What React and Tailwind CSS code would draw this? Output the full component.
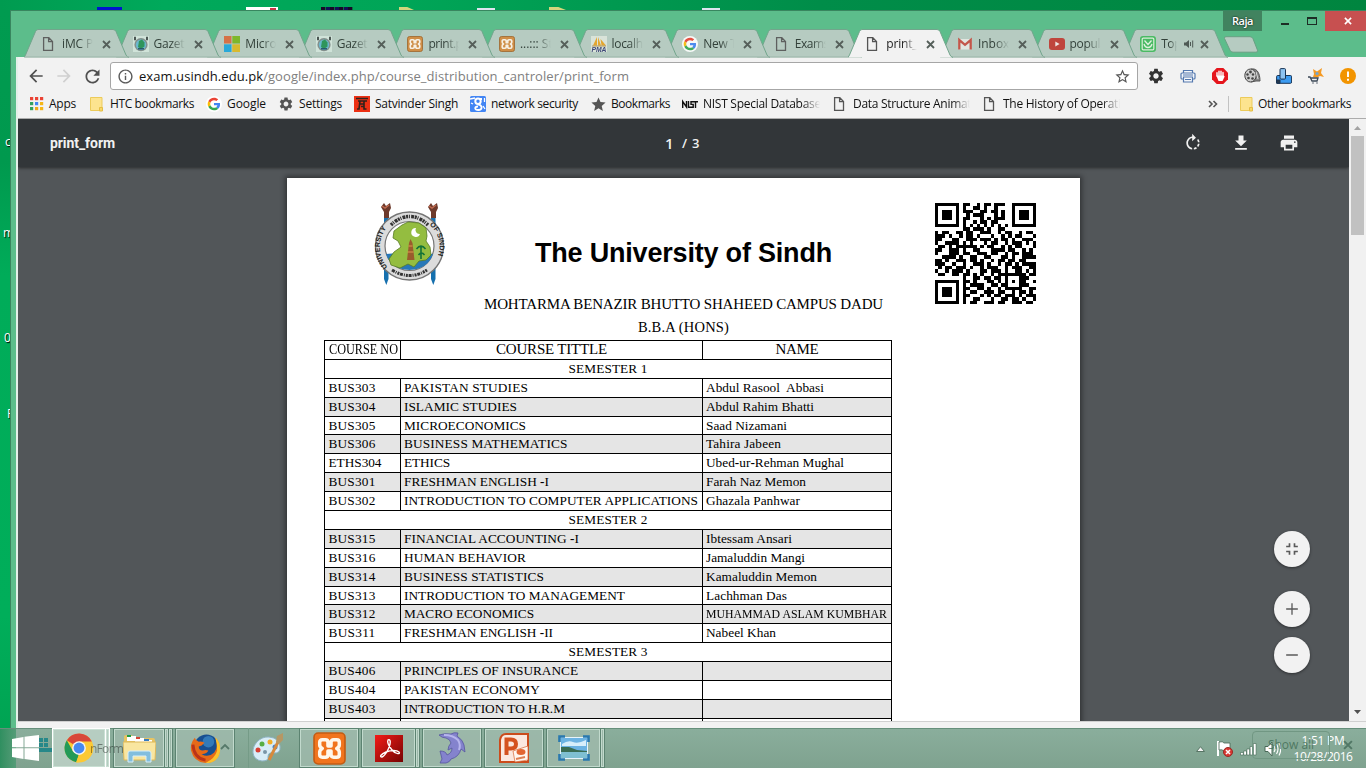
import React, { useLayoutEffect, useRef, useState } from 'react';

// Text set to an exact advance width, by letter spacing or by horizontal squeeze.
function Fit({ w, children, className = '', squeeze = false }) {
  const ref = useRef(null);
  const [style, setStyle] = useState({});
  useLayoutEffect(() => {
    const el = ref.current;
    const natural = el.getBoundingClientRect().width;
    const n = Math.max(1, el.textContent.length);
    setStyle(
      squeeze
        ? { transform: `scaleX(${w / natural})`, transformOrigin: '0 50%', marginRight: w - natural }
        : { letterSpacing: `${(w - natural) / n}px` }
    );
  }, []);
  return (
    <span ref={ref} style={style} className={`inline-block shrink-0 whitespace-pre ${className}`}>
      {children}
    </span>
  );
}

const PageIcon = () => (
  <svg width="16" height="16" viewBox="0 0 16 16" fill="none" stroke="#555" strokeWidth="1.3">
    <path d="M2.600 1.700h5.200l3.700 3.800v8.800H2.600zM7.600 1.700v4h3.900" />
  </svg>
);
const Cross = ({ c = '#555f5a', s = 9 }) => (
  <svg width={s} height={s} viewBox="0 0 9 9" stroke={c} strokeWidth="1.8"><path d="M1 1l7 7M8 1L1 8" /></svg>
);
const Google = ({ bg = true }) => (
  <svg width="16" height="16" viewBox="0 0 48 48">
    {bg && <circle cx="24" cy="24" r="24" fill="#fff" />}
    <g transform="translate(5 5) scale(.79)">
      <path fill="#EA4335" d="M24 9.5c3.54 0 6.71 1.22 9.21 3.6l6.85-6.85C35.9 2.38 30.47 0 24 0 14.62 0 6.51 5.38 2.56 13.22l7.98 6.19C12.43 13.72 17.74 9.5 24 9.5z" />
      <path fill="#4285F4" d="M46.98 24.55c0-1.57-.15-3.09-.38-4.55H24v9.02h12.94c-.58 2.96-2.26 5.48-4.78 7.18l7.73 6c4.51-4.18 7.09-10.36 7.09-17.65z" />
      <path fill="#FBBC05" d="M10.53 28.59c-.48-1.45-.76-2.99-.76-4.59s.27-3.14.76-4.59l-7.98-6.19C.92 16.46 0 20.12 0 24c0 3.88.92 7.54 2.56 10.78l7.97-6.19z" />
      <path fill="#34A853" d="M24 48c6.48 0 11.93-2.13 15.89-5.81l-7.73-6c-2.15 1.45-4.92 2.3-8.16 2.3-6.26 0-11.57-4.22-13.47-9.91l-7.98 6.19C6.51 42.62 14.62 48 24 48z" />
    </g>
  </svg>
);
const Gazette = () => (
  <svg width="16" height="16" viewBox="0 0 16 16">
    <rect width="16" height="16" fill="#d3e6dc" />
    <circle cx="8" cy="8.7" r="6.6" fill="#7d8886" />
    <circle cx="8" cy="8.7" r="5.2" fill="#62b7d0" />
    <path d="M6 5l3-1.500 2.500 3v4l-3.500 2.500-3-2z" fill="#219052" />
    <path d="M2 .8v3.500M14 .8v3.500" stroke="#303a38" strokeWidth="1.800" />
    <path d="M5 12.800h6" stroke="#17455c" strokeWidth="1.400" />
  </svg>
);
const Xampp = ({ size = 16, edge = '#9a5a1c', fill = '#d2883a' }) => (
  <svg width={size} height={size} viewBox="0 0 32 32">
    <rect x="1" y="1" width="30" height="30" rx="4" fill={fill} stroke={edge} strokeWidth="1.6" />
    <path d="M9 7.500h3q2.500 0 2.500 2.500v3.500h3V10q0-2.500 2.500-2.500h3q2.500 0 2.500 2.500v2.500q0 2-2.500 3.500 2.500 1.500 2.500 3.500V22q0 2.500-2.500 2.500h-3q-2.500 0-2.500-2.500v-3.500h-3V22q0 2.500-2.500 2.500H9Q6.500 24.500 6.500 22v-2.500q0-2 2.500-3.500-2.500-1.500-2.500-3.500V10Q6.500 7.500 9 7.500z" fill="none" stroke="#fff6ea" strokeWidth="3.4" strokeLinejoin="round" />
  </svg>
);
const Microsoft = () => (
  <svg width="16" height="16" viewBox="0 0 16 16">
    <path fill="#d9683a" d="M0 0h7.500v7.500H0z" /><path fill="#79b51c" d="M8.300 0H16v7.500H8.300z" />
    <path fill="#19a5dc" d="M0 8.300h7.500V16H0z" /><path fill="#dcb91f" d="M8.300 8.300H16V16H8.300z" />
  </svg>
);
const Pma = () => (
  <svg width="16" height="16" viewBox="0 0 16 16">
    <rect width="16" height="16" fill="#dde6dc" />
    <path d="M6 1L2 9.500h4zM7 1v8.500h3zM9.500 3l1 6.500h4.500z" fill="#e9a220" />
    <path d="M1 10h14" stroke="#a87c2b" strokeWidth=".8" />
    <text x="0.500" y="16" fontFamily="Liberation Sans" fontSize="6.500" fontWeight="bold" fontStyle="italic" fill="#30396f" textLength="15" lengthAdjust="spacingAndGlyphs">PMA</text>
  </svg>
);
const Gmail = () => (
  <svg width="16" height="16" viewBox="0 0 16 16">
    <path d="M1.500 3h13v10.500h-13z" fill="#e6e9e4" />
    <path d="M2.300 13.500V4l5.700 4.800L13.700 4v9.500" fill="none" stroke="#c54a3e" strokeWidth="2.300" />
  </svg>
);
const Youtube = () => (
  <svg width="16" height="16" viewBox="0 0 16 16"><rect y="2" width="16" height="12" rx="3" fill="#c0382f" /><path d="M6.300 5.500v5l4.300-2.500z" fill="#f3e9e6" /></svg>
);
const Vine = () => (
  <svg width="16" height="16" viewBox="0 0 16 16">
    <rect width="16" height="16" rx="3" fill="#3fb95b" /><rect x="2.200" y="2.200" width="11.600" height="11.600" rx="1" fill="none" stroke="#dff2dd" strokeWidth="1.200" />
    <path d="M4.500 4.500l3.500 4 3.500-4M4 8q1 3.500 4 3.500T12 8" stroke="#e6f6e4" fill="none" strokeWidth="1.300" />
  </svg>
);
const Speaker = () => (
  <svg width="10" height="10" viewBox="0 0 10 10"><path d="M0 3.500h2L5 1v8L2 6.500H0z" fill="#4f5a55" /><path d="M6.500 3v4M8.700 1.500v7" stroke="#4f5a55" strokeWidth="1" /></svg>
);

const TABS = [
  { t: 'iMC P', w: 31, i: <PageIcon /> },
  { t: 'Gazette', w: 41, i: <Gazette /> },
  { t: 'Micros', w: 37, i: <Microsoft /> },
  { t: 'Gazette', w: 41, i: <Gazette /> },
  { t: 'print.ph', w: 41, i: <Xampp /> },
  { t: '...::: Stu', w: 40, i: <Xampp /> },
  { t: 'localho', w: 38, i: <Pma /> },
  { t: 'New Ta', w: 40, i: <Google /> },
  { t: 'Exams', w: 34, i: <PageIcon /> },
  { t: 'print_', w: 31, i: <PageIcon />, on: true },
  { t: 'Inbox (', w: 38, i: <Gmail /> },
  { t: 'popula', w: 37, i: <Youtube /> },
  { t: 'Top', w: 20, i: <Vine />, sound: true },
];
const Z = ['z-[13]', 'z-[12]', 'z-[11]', 'z-10', 'z-[9]', 'z-[8]', 'z-[7]', 'z-[6]', 'z-[5]', 'z-20', 'z-[4]', 'z-[3]', 'z-[2]'];

function Tab({ tab, index }) {
  return (
    <div className={`relative h-7 w-[91.600px] shrink-0 ${Z[index]}`}>
      <svg className="absolute left-0 top-0" width="106" height="29" viewBox="0 0 106 29">
        <path d="M0 28.500L1.500 26 11.500 2.500Q12.300.5 14 .5H89Q91 .5 92 2.500L102 26Q103 28 105 28.500z" fill={tab.on ? '#f2f2f2' : '#b6cbc1'} />
        <path d="M0 28.500L1.500 26 11.500 2.500Q12.300.5 14 .5H89Q91 .5 92 2.500L102 26Q103 28 105 28.500" fill="none" stroke="#72a58c" />
        {!tab.on && <path d="M1 28h104" stroke="#9bb5a8" />}
      </svg>
      <div className="relative flex h-full items-center pl-[17px] pt-0.5">
        <span className={`flex w-[21px] shrink-0 ${tab.on ? '' : 'opacity-90'}`}>{tab.i}</span>
        <span className={`shrink-0 overflow-hidden ${tab.sound ? 'mr-[7px] w-4' : 'mr-[9px] w-[31px]'} [mask-image:linear-gradient(90deg,#000_55%,transparent)]`}>
          <Fit w={tab.w} className={tab.on ? 'text-[#222]' : 'text-[#33413a]'}>{tab.t}</Fit>
        </span>
        {tab.sound && <span className="mr-[6px]"><Speaker /></span>}
        <Cross />
      </div>
    </div>
  );
}

const Folder = () => (
  <svg width="16" height="16" viewBox="0 0 16 16"><path d="M1.500 1.500h11.500v13H1.500z" fill="#fde48f" stroke="#eccb5a" /><path d="M10.500 15v-3.500h3V15z" fill="#f8d766" stroke="#e5be44" /></svg>
);
const Apps = () => {
  const c = ['#ea4335', '#ea4335', '#ea4335', '#34a060', '#4285f4', '#f5b513', '#34a060', '#f0a71a', '#f5b513'];
  return <svg width="16" height="16" viewBox="0 0 16 16">{c.map((f, i) => <rect key={i} x={2 + (i % 3) * 5} y={1 + Math.floor(i / 3) * 5} width="3.200" height="3.200" fill={f} />)}</svg>;
};
const GEAR = 'M19.140 12.940c.04-.3.06-.61.06-.94 0-.32-.02-.64-.07-.94l2.030-1.580c.18-.14.23-.41.12-.61l-1.920-3.320c-.12-.22-.37-.29-.59-.22l-2.390.96c-.5-.38-1.030-.7-1.620-.94l-.36-2.540c-.04-.24-.24-.41-.48-.41h-3.840c-.24 0-.43.17-.47.41l-.36 2.540c-.59.24-1.130.57-1.620.94l-2.390-.96c-.22-.08-.47 0-.59.22L2.740 8.870c-.12.21-.08.47.12.61l2.030 1.580c-.05.3-.09.63-.09.94s.02.64.07.94l-2.030 1.580c-.18.14-.23.41-.12.61l1.920 3.320c.12.22.37.29.59.22l2.390-.96c.5.38 1.030.7 1.620.94l.36 2.540c.05.24.24.41.48.41h3.840c.24 0 .44-.17.47-.41l.36-2.540c.59-.24 1.130-.56 1.620-.94l2.390.96c.22.08.47 0 .59-.22l1.920-3.320c.12-.22.07-.47-.12-.61l-2.010-1.580zM12 15.600c-1.980 0-3.600-1.620-3.600-3.600s1.620-3.600 3.600-3.600 3.600 1.620 3.600 3.600-1.620 3.600-3.600 3.600z';
const Mat = ({ d, s = 18, c = '#f1f1f1' }) => <svg width={s} height={s} viewBox="0 0 24 24" fill={c}><path d={d} /></svg>;
const STAR = 'M12 17.270L18.180 21l-1.640-7.030L22 9.240l-7.190-.61L12 2 9.190 8.630 2 9.240l5.460 4.730L5.820 21z';

const Torii = () => (
  <svg width="16" height="16" viewBox="0 0 16 16"><rect width="16" height="16" fill="#ec3013" /><path d="M2 2.500h12M4 5h9M6 5L5 13H3M10 5v8h2.500M6 8h4v2.500H7" stroke="#30221c" strokeWidth="1.600" fill="none" /></svg>
);
const BlueG = () => (
  <svg width="16" height="16" viewBox="0 0 16 16"><rect width="16" height="16" rx="1.500" fill="#4285f4" /><path d="M0 3l5-1M1 7l2 1M14.500 2v4M13 10l2 3" stroke="#fff" strokeWidth="1.300" /><circle cx="8" cy="5.300" r="2.700" fill="none" stroke="#fff" strokeWidth="2" /><path d="M9.500 3h2.500M8 8.300c5 1 4.500 5.700.3 5.700C4 14 4.500 10.500 8 10.500" stroke="#fff" strokeWidth="1.800" fill="none" /></svg>
);
const Nist = () => (
  <svg width="16" height="16" viewBox="0 0 16 16"><path d="M.7 12V5.500L4.500 11V5M6.500 5v6.300h4.700V8.400H9V5.700h7M13.500 5.700V12" stroke="#111" strokeWidth="1.400" fill="none" /></svg>
);

const BOOKMARKS = [
  { t: 'Apps', w: 27, box: 'w-[61px]', i: <Apps /> },
  { t: 'HTC bookmarks', w: 84, box: 'w-[117px]', i: <Folder /> },
  { t: 'Google', w: 39, box: 'w-[72px]', i: <Google /> },
  { t: 'Settings', w: 43, box: 'w-[76px]', i: <Mat s={16} c="#555" d={GEAR} /> },
  { t: 'Satvinder Singh', w: 83, box: 'w-[116px]', i: <Torii /> },
  { t: 'network security', w: 87, box: 'w-[120px]', i: <BlueG /> },
  { t: 'Bookmarks', w: 59, box: 'w-[92px]', i: <Mat s={17} c="#555" d={STAR} /> },
  { t: 'NIST Special Database', w: 118, box: 'w-[150px]', i: <Nist />, fade: true },
  { t: 'Data Structure Animati', w: 121, box: 'w-[150px]', i: <PageIcon />, fade: true },
  { t: 'The History of Operatin', w: 125, box: 'w-[150px]', i: <PageIcon />, fade: true },
];

const EXTENSIONS = [
  <Mat s={18} c="#333" d={GEAR} />,
  <svg width="16" height="16" viewBox="0 0 16 16" fill="#f4f7fb" stroke="#5478ae" strokeWidth="1.200"><path d="M3.500 5V2.500h9V5" /><rect x="1" y="5" width="14" height="6" rx="1" /><path d="M3.500 9h9v5h-9zM3 7h10M5 11.500h6" /></svg>,
  <svg width="16" height="16" viewBox="0 0 16 16"><path d="M4.700 0h6.600L16 4.700v6.600L11.300 16H4.700L0 11.300V4.700z" fill="#e5151c" /><path d="M5 8V4.800M7 7.500V3.300M9 7.500V3.300M11 8V4.500" stroke="#fff" strokeWidth="1.400" strokeLinecap="round" /><path d="M4.300 7.500h7.400L12.700 8.500 10.500 13H6.500z" fill="#fff" /></svg>,
  <svg width="17" height="16" viewBox="0 0 17 16"><path d="M7 1h3c5 1 6 8 6 12h-4L7 14z" fill="#888" stroke="#555" /><ellipse cx="6.500" cy="7.500" rx="5.700" ry="6.500" fill="#ccc" stroke="#444" /><g fill="#444"><circle cx="6.500" cy="4" r="1.400" /><circle cx="3.500" cy="6.500" r="1.200" /><circle cx="9" cy="6.500" r="1.200" /><circle cx="4.500" cy="10" r="1.300" /><circle cx="8.500" cy="10.500" r="1.300" /></g><path d="M12 4l2 7" stroke="#ddd" /></svg>,
  <svg width="16" height="16" viewBox="0 0 16 16" stroke="#193454" strokeWidth="1"><rect x=".6" y="7.500" width="15" height="7.800" rx="1.200" fill="#3c9bf1" /><path d="M.6 12h3.400v3.300H.6z" fill="#27384c" /><rect x="4" y=".6" width="5.500" height="10.500" rx="1" fill="#8cc2f0" /></svg>,
  <svg width="16" height="16" viewBox="0 0 16 16"><path d="M5 1l4 2.500L14 0l-1 5 3 4-4-1-3 1.500L5 9l1-3z" fill="#f59a23" /><circle cx="9" cy="5.500" r="1.600" fill="#71a6d4" /><path d="M0 9h2l2 4h5l1-3H3M4.500 15h1M8.500 15h1" stroke="#3d4958" strokeWidth="1.300" fill="none" /></svg>,
  <svg width="16" height="16" viewBox="0 0 16 16"><circle cx="8" cy="8" r="8" fill="#f29400" /><path d="M8 3.500v5.500M8 10.700v2" stroke="#fff" strokeWidth="1.900" /></svg>,
];

function Browser() {
  return (
    <div className="absolute left-[10px] top-[10px] flex h-[758px] w-[1356px] flex-col border-l border-t border-[#38865f] bg-[#5cbd8b]">
      <div className="relative h-[18px] shrink-0">
        <div className="absolute right-0 top-0 flex h-5">
          <div className="flex w-[39px] items-center justify-center bg-[#41835f] text-[11px] text-white [text-shadow:0_0_2px_#000]"><Fit w={21} className="font-semibold">Raja</Fit></div>
          <div className="flex w-[63px] items-center pl-[19px]">
            <div className="mr-[18px] mt-1.5 h-[2px] w-2 bg-[#1d2d25]" />
            <div className="h-2 w-[10px] border border-t-2 border-[#1d2d25]" />
          </div>
          <div className="flex w-[41px] items-center justify-center bg-[#c75050] pl-1"><Cross c="#fff" s={8} /></div>
        </div>
      </div>
      <div className="flex h-7 shrink-0 pl-[13px]">
        {TABS.map((t, i) => <Tab key={i} tab={t} index={i} />)}
        <svg className="ml-[8.500px] mt-[7px]" width="36" height="18" viewBox="0 0 36 18"><path d="M3 .7h24q2 0 3 2l4.500 11.500q.5 2-1.500 2H10q-2 0-3-2L1.500 2.500Q1 .7 3 .7z" fill="#b6cbc1" stroke="#69a083" /></svg>
      </div>
      <div className="ml-[5px] flex min-h-0 flex-1 flex-col border-l-2 border-[#e6f0ea] bg-[#f2f2f2]">
        <div className="flex h-[35px] shrink-0 items-center pl-[8px] pt-[3px]">
          <span className="flex w-7"><Mat s={20} c="#505050" d="M20 11H7.830l5.590-5.590L12 4l-8 8 8 8 1.410-1.410L7.830 13H20v-2z" /></span>
          <span className="flex w-7"><Mat s={20} c="#d0d0d0" d="M12 4l-1.410 1.410L16.170 11H4v2h12.170l-5.580 5.590L12 20l8-8z" /></span>
          <span className="flex w-[28px]"><Mat s={21} c="#505050" d="M17.650 6.350C16.200 4.900 14.210 4 12 4c-4.420 0-7.990 3.580-7.990 8s3.570 8 7.990 8c3.730 0 6.840-2.550 7.730-6h-2.080c-.82 2.330-3.040 4-5.650 4-3.310 0-6-2.690-6-6s2.690-6 6-6c1.660 0 3.140.69 4.220 1.780L13 11h7V4l-2.350 2.350z" /></span>
          <div className="flex h-7 w-[1028px] items-center rounded-[3px] border border-[#a6a6a6] bg-white pl-[6px]">
            <Mat s={17} c="#5a5a5a" d="M11 17h2v-6h-2v6zm1-15C6.480 2 2 6.480 2 12s4.480 10 10 10 10-4.480 10-10S17.520 2 12 2zm0 18c-4.410 0-8-3.590-8-8s3.590-8 8-8 8 3.590 8 8-3.590 8-8 8zM11 9h2V7h-2v2z" />
            <Fit w={490} className="ml-[5px] text-[13px] text-[#808080]"><span className="text-[#111]">exam.usindh.edu.pk</span>/google/index.php/course_distribution_cantroler/print_form</Fit>
            <span className="ml-auto mr-1.5"><Mat s={17} c="#555" d="M22 9.240l-7.190-.62L12 2 9.190 8.630 2 9.240l5.460 4.730L5.820 21 12 17.270 18.180 21l-1.630-7.030L22 9.240zM12 15.400l-3.760 2.270 1-4.280-3.320-2.880 4.380-.38L12 6.100l1.710 4.040 4.380.38-3.320 2.880 1 4.280L12 15.400z" /></span>
          </div>
          <div className="ml-[2px] flex">
            {EXTENSIONS.map((e, i) => <span key={i} className="flex w-8 items-center justify-center">{e}</span>)}
          </div>
        </div>
        <div className="flex h-[27px] shrink-0 items-center border-b border-[#acacac] pb-0.5 pl-[10px] text-[#111]">
          {BOOKMARKS.map((b) => (
            <div key={b.t} className={`flex shrink-0 items-center ${b.box}`}>
              <span className="flex w-[21px] shrink-0">{b.i}</span>
              <span className={b.fade ? 'w-[117px] overflow-hidden [mask-image:linear-gradient(90deg,#000_85%,transparent)]' : ''}><Fit w={b.w}>{b.t}</Fit></span>
            </div>
          ))}
          <svg className="ml-[76px]" width="10" height="9" viewBox="0 0 10 9" fill="none" stroke="#555" strokeWidth="1.600"><path d="M1 1l3 3-3 3M5.500 1l3 3-3 3" /></svg>
          <div className="mx-[10px] h-4 w-px bg-[#c2c2c2]" />
          <Folder />
          <Fit w={93} className="ml-[3px]">Other bookmarks</Fit>
        </div>
        <div className="flex h-[602px] shrink-0">
          <Viewer />
          <div className="flex w-[17px] flex-col items-center bg-[#f1f1f1] pt-[7px]">
            <svg width="7" height="4" viewBox="0 0 7 4" fill="#a3a3a3"><path d="M0 4L3.500 0 7 4z" /></svg>
            <div className="mt-[6px] h-[99px] w-[13px] bg-[#c1c1c1]" />
            <svg className="mb-[7px] mt-auto" width="7" height="4" viewBox="0 0 7 4" fill="#505050"><path d="M0 0L3.500 4 7 0z" /></svg>
          </div>
        </div>
        <div className="flex-1 border-t border-[#d0d0d0] bg-[#f2f2f2]" />
      </div>
    </div>
  );
}

function Viewer() {
  return (
    <div className="relative flex h-full w-[1331px] flex-col overflow-hidden bg-[#525659]">
      <div className="relative z-10 flex h-12 shrink-0 items-center bg-[#323639] pl-8 text-[#f1f1f1] shadow-[0_1px_3px_rgba(0,0,0,.5)]">
        <Fit w={65} className="font-['Roboto','Open_Sans',sans-serif] text-[14px] font-bold">print_form</Fit>
        <div className="ml-[550px] flex w-[36px] items-center font-['Open_Sans',sans-serif] font-semibold"><span className="w-[17px] text-[15px]">1</span><span className="w-[10px] text-[13px]">/</span><span className="text-[13px]">3</span></div>
        <div className="ml-auto mr-[50px] flex gap-7">
          <Mat s={20} d="M15.550 5.550L11 1v3.070C7.060 4.560 4 7.920 4 12s3.050 7.440 7 7.930v-2.020c-2.840-.48-5-2.940-5-5.910s2.160-5.430 5-5.910V10l4.550-4.450zM19.930 11c-.17-1.390-.72-2.730-1.620-3.890l-1.420 1.420c.54.75.88 1.600 1.020 2.470h2.020zM13 17.900v2.020c1.390-.17 2.740-.71 3.900-1.610l-1.440-1.440c-.75.54-1.590.89-2.460 1.030zm3.890-2.420l1.420 1.410c.9-1.160 1.450-2.500 1.620-3.890h-2.020c-.14.870-.48 1.720-1.020 2.480z" />
          <Mat s={20} d="M19 9h-4V3H9v6H5l7 7 7-7zM5 18v2h14v-2H5z" />
          <Mat s={20} d="M19 8H5c-1.660 0-3 1.340-3 3v6h4v4h12v-4h4v-6c0-1.660-1.340-3-3-3zm-3 11H8v-5h8v5zm3-7c-.55 0-1-.45-1-1s.45-1 1-1 1 .45 1 1-.45 1-1 1zm-1-9H6v4h12V3z" />
        </div>
      </div>
      <Sheet />
      <div className="absolute right-[39px] top-[412px] flex flex-col">
        {[
          ['mb-6', 20, 'M5 16h3v3h2v-5H5v2zm3-8H5v2h5V5H8v3zm6 11h2v-3h3v-2h-5v5zm2-11V5h-2v5h5V8h-3z'],
          ['mb-2.5', 20, 'M19 12.800h-6.200V19h-1.600v-6.200H5v-1.600h6.200V5h1.600v6.200H19z'],
          ['', 20, 'M19 12.900H5v-1.800h14z'],
        ].map(([m, s, d]) => (
          <div key={d} className={`flex size-9 items-center justify-center rounded-full bg-[#f2f2f2] shadow-[0_1px_3px_rgba(0,0,0,.45)] ${m}`}><Mat s={s} c="#5a5a5a" d={d} /></div>
        ))}
      </div>
    </div>
  );
}

const QR_ROWS = [
  '........##..#.##.###.........',
  '........#..##.#..#...........',
  '........###..##.##.#.........',
  '.........#.###...#.#.........',
  '........##...#.#.###.........',
  '........#..#.##.##...........',
  '.............................',
  '........##.###.#..##.........',
  '#.##..##.##..###..#.##..#.##.',
  '###.#..#.##.#...#..#.#.##...#',
  '##...##..###.###.#.##.#..###.',
  '#..####.#.#...#.##..#.###.#.#',
  '.##.#..#####.#.##..#.#.##...#',
  '##..###.#..##...####.##..#.#.',
  '#...###.##..###.##..#.##.###.',
  '..####.#..##..##...##.#..####',
  '##.#..###.##.#..#.##.##.##...',
  '###..#..#..###.#..#.##.#.####',
  '.#.##.###.#..#.###..#.###..##',
  '#..#.###.#...##.###.#..##.#.#',
  '.##..##.##.#.#..#.########.##',
  '........#..##.##.##.#...###..',
  '........##.#...##.#.#.#.##..#',
  '........#.####..##.##...###..',
  '........##..##.#..#.#####..##',
  '........#.##..###.##..#.##.#.',
  '........##...#.#.##.###.#.###',
  '........#..##...#..##.##.#..#',
  '........#.##..###.##..###.##.',
];
const Qr = () => (
  <svg width="101" height="101" viewBox="0 0 29 29" shapeRendering="crispEdges">
    {QR_ROWS.flatMap((r, y) => [...r].map((c, x) => (c === '#' ? <rect key={`${x}-${y}`} x={x} y={y} width="1" height="1" /> : null)))}
    {[8, 10, 12, 14, 16, 18, 20].map((n) => <g key={n}><rect x={n} y="6" width="1" height="1" /><rect x="6" y={n} width="1" height="1" /></g>)}
    {[[0, 0], [22, 0], [0, 22]].map(([x, y]) => (
      <g key={`${x}${y}`}><rect x={x} y={y} width="7" height="7" /><rect x={x + 1} y={y + 1} width="5" height="5" fill="#fff" /><rect x={x + 2} y={y + 2} width="3" height="3" /></g>
    ))}
    <rect x="20" y="20" width="5" height="5" /><rect x="21" y="21" width="3" height="3" fill="#fff" /><rect x="22" y="22" width="1" height="1" />
  </svg>
);

const Torch = ({ x }) => (
  <g>
    <path d={`M${x - 2} 16h4.500v61l-2.200 6-2.300-6z`} fill="#1670ae" />
    <path d={`M${x - 5} 5l3-4 2 3 4-3 1 5-2 4v6h-5v-6z`} fill="#6d3a2c" />
    <path d={`M${x - 4} 4l3 2 4-3`} stroke="#c06a4f" strokeWidth="1.500" fill="none" />
  </g>
);
const Seal = () => (
  <svg width="72" height="84" viewBox="0 0 72 84">
    <Torch x={12} /><Torch x={59} />
    <circle cx="35.500" cy="44" r="34" fill="#dcdcdc" stroke="#757575" strokeWidth="1.400" />
    <circle cx="35.500" cy="44" r="24.500" fill="#fff" stroke="#777" strokeWidth="1.200" />
    <path d="M12 52q24-3 47 0-5 15-23.500 16Q17 67 12 52z" fill="#2878b8" />
    <path d="M28 23l6-3 11 1 7 5 1 8-1 5 4 6 1 8-5 5-7 1-5 6-6-3-8 4-9-3-2-6 5-7 7-5-3-6-5-3 1-7z" fill="#94bd40" stroke="#587b25" strokeWidth=".8" />
    <path d="M33 58l2-17 1.500-4 2 4 2 17z" fill="#9a5b2c" /><path d="M34.500 44h4M33.500 50h6" stroke="#dd9a4f" />
    <path d="M47 57V44m-4.500 3q4.500-6 9 0m-7 6q3-4 6 0" stroke="#137238" strokeWidth="1.600" fill="none" />
    <path d="M42 26a4.500 4.500 0 1 0 4 6 4 4 0 0 1-4-6z" fill="#fff" />
    <defs>
      <path id="arcL" d="M13.500 65A30 30 0 0 1 14.500 24" /><path id="arcR" d="M55.500 23A27 27 0 0 1 55.500 65" />
    </defs>
    <g fontFamily="Liberation Sans" fontWeight="bold" fontSize="7" fill="#222">
      <text><textPath href="#arcL">UNIVERSITY</textPath></text>
      <text><textPath href="#arcR">OF SINDH</textPath></text>
    </g>
    <path d="M17 23q8-8 18-8.500T54 23" stroke="#333" strokeWidth="3.500" strokeDasharray="2 .8 1 1.200 3 .7" fill="none" />
    <path d="M18 68q18 11 35 0" stroke="#333" strokeWidth="3" strokeDasharray="3 1 1 1 2 .8" fill="none" />
  </svg>
);

const ROWS = [
  { s: 'SEMESTER 1' },
  { c: 'BUS303', t: 'PAKISTAN STUDIES', tw: 124, n: 'Abdul Rasool  Abbasi', nw: 118 },
  { c: 'BUS304', t: 'ISLAMIC STUDIES', tw: 113, n: 'Abdul Rahim Bhatti', nw: 108, g: 1 },
  { c: 'BUS305', t: 'MICROECONOMICS', tw: 122, n: 'Saad Nizamani', nw: 81 },
  { c: 'BUS306', t: 'BUSINESS MATHEMATICS', tw: 163.5, n: 'Tahira Jabeen', nw: 75, g: 1 },
  { c: 'ETHS304', t: 'ETHICS', tw: 46, n: 'Ubed-ur-Rehman Mughal', nw: 138 },
  { c: 'BUS301', t: 'FRESHMAN ENGLISH -I', tw: 145, n: 'Farah Naz Memon', nw: 100, g: 1 },
  { c: 'BUS302', t: 'INTRODUCTION TO COMPUTER APPLICATIONS', tw: 294, n: 'Ghazala Panhwar', nw: 94 },
  { s: 'SEMESTER 2' },
  { c: 'BUS315', t: 'FINANCIAL ACCOUNTING -I', tw: 175, n: 'Ibtessam Ansari', nw: 86, g: 1 },
  { c: 'BUS316', t: 'HUMAN BEHAVIOR', tw: 122, n: 'Jamaluddin Mangi', nw: 99 },
  { c: 'BUS314', t: 'BUSINESS STATISTICS', tw: 140, n: 'Kamaluddin Memon', nw: 111, g: 1 },
  { c: 'BUS313', t: 'INTRODUCTION TO MANAGEMENT', tw: 221, n: 'Lachhman Das', nw: 81 },
  { c: 'BUS312', t: 'MACRO ECONOMICS', tw: 130, n: 'MUHAMMAD ASLAM KUMBHAR', nw: 181, g: 1, q: true },
  { c: 'BUS311', t: 'FRESHMAN ENGLISH -II', tw: 149, n: 'Nabeel Khan', nw: 70 },
  { s: 'SEMESTER 3' },
  { c: 'BUS406', t: 'PRINCIPLES OF INSURANCE', tw: 174, g: 1 },
  { c: 'BUS404', t: 'PAKISTAN ECONOMY', tw: 136 },
  { c: 'BUS403', t: 'INTRODUCTION TO H.R.M', tw: 161, g: 1 },
  { c: '', t: '', tw: 0 },
];
const hyphens = (s) => s.split(/(-)/).map((p, i) => (p === '-' ? <b key={i}>-</b> : p));

function Sheet() {
  return (
    <div className="ml-[269px] mt-[11px] h-[700px] w-[793px] shrink-0 bg-white font-['Liberation_Serif',serif] text-[13.300px] text-black shadow-[0_0_5px_2px_rgba(0,0,0,.4)]">
      <div className="flex h-[113px] pl-[87px] pt-[24px]">
        <Seal />
        <h1 className="ml-[89px] pt-[33px] font-['Liberation_Sans',sans-serif] text-[27px] font-bold leading-9"><Fit w={297}>The University of Sindh</Fit></h1>
        <div className="ml-[103px] pt-px"><Qr /></div>
      </div>
      <div className="flex h-[26px] items-center justify-center text-[15px]"><Fit w={399}>MOHTARMA BENAZIR BHUTTO SHAHEED CAMPUS DADU</Fit></div>
      <div className="flex h-[23px] items-center justify-center pb-1 text-[14.500px]"><Fit w={91}>B.B.A (HONS)</Fit></div>
      <div className="ml-[37px] w-[568px] border-x border-t border-black leading-4">
        <div className="flex h-[18.900px] border-b border-black text-[15px]">
          <div className="w-[76px] border-r border-black pl-[3.500px]"><Fit w={69} squeeze>COURSE NO</Fit></div>
          <div className="w-[302px] border-r border-black text-center"><Fit w={111}>COURSE TITTLE</Fit></div>
          <div className="w-[188px] text-center"><Fit w={43}>NAME</Fit></div>
        </div>
        {ROWS.map((r, i) =>
          r.s ? (
            <div key={i} className="flex h-[18.900px] items-center justify-center border-b border-black"><Fit w={79}>{r.s}</Fit></div>
          ) : (
            <div key={i} className={`flex h-[18.900px] border-b border-black ${r.g ? 'bg-[#e5e5e5]' : ''}`}>
              <div className="flex w-[76px] items-center border-r border-black pl-[3.500px]">{r.c && <Fit w={r.c.length === 7 ? 53 : 47}>{r.c}</Fit>}</div>
              <div className="flex w-[302px] items-center border-r border-black pl-[3px]">{r.t && <Fit w={r.tw}>{hyphens(r.t)}</Fit>}</div>
              <div className="flex w-[188px] items-center pl-[3px]">{r.n && <Fit w={r.nw} squeeze={r.q}>{hyphens(r.n)}</Fit>}</div>
            </div>
          )
        )}
      </div>
    </div>
  );
}

const ChromeLogo = () => (
  <svg width="30" height="30" viewBox="0 0 48 48">
    <circle cx="24" cy="24" r="23" fill="#fcc934" />
    <path d="M24 24L4.500 11.500A23 23 0 0 1 44.500 13.500H24z" fill="#d8473a" />
    <path d="M4.500 11.500L14.500 29.500 24 34l-4.500 12.700A23 23 0 0 1 4.500 11.500z" fill="#239a58" />
    <path d="M24 24L33.500 29.500 23 47H19.500L24 34z" fill="#fcc934" />
    <circle cx="24" cy="24" r="11" fill="#f5f5f5" /><circle cx="24" cy="24" r="8.700" fill="#4688f1" />
  </svg>
);
const Explorer = () => (
  <svg width="33" height="30" viewBox="0 0 33 30">
    <path d="M1 4q0-2 2-2h6l2 3h19q2 0 2 2v19H1z" fill="#e7c463" />
    <path d="M4 3h9v5H4zM12 5h9v5h-9zM20 7h9v4h-9z" fill="#fff" /><path d="M4 2h4v2H4z" fill="#1e9c44" /><path d="M13 4h4v2h-4z" fill="#d64536" /><path d="M21 6h5v2h-5z" fill="#367cc2" />
    <path d="M0 9h33l-1 18H1z" fill="#f9e6a0" stroke="#dcb85b" />
    <path d="M5 29V20q0-2 2-2h19q2 0 2 2v9h-5v-6H10v6z" fill="#82bede" stroke="#d8effa" />
  </svg>
);
const Firefox = () => (
  <svg width="31" height="31" viewBox="0 0 32 32">
    <circle cx="17" cy="14" r="12.500" fill="#174f91" /><circle cx="19" cy="9" r="6" fill="#3f8dca" opacity=".7" />
    <path d="M5 5q-5 6-4 13 3 12 15 13 13 0 15-13 0-9-5-13 4 9-1 15-6 6-13 2 6-1 7-4-3-1-6 0-4 0-4-4l3-1 3-3q-4-2-6-1L6 7z" fill="#e66a18" />
    <path d="M26 4q6 6 5 15-2 12-15 12 10-5 12-13 0-7-2-14z" fill="#fcc12c" />
    <path d="M3 12q1 14 13 16" stroke="#ba3419" strokeWidth="3" fill="none" />
  </svg>
);
const Paint = () => (
  <svg width="32" height="30" viewBox="0 0 32 30">
    <path d="M17 4C8 3 0 12 1 20q1 7 9 8 7 0 6-4 0-5 5-4 8 1 7-7-1-8-11-9z" fill="#d8edf7" stroke="#8fb4c5" />
    <g><circle cx="10" cy="11" r="2.500" fill="#58ae43" /><circle cx="18" cy="9" r="2.500" fill="#f1ad28" /><circle cx="6" cy="17" r="2.500" fill="#d83e32" /><circle cx="13" cy="19" r="2" fill="#7a96a8" /><circle cx="23" cy="14" r="2.500" fill="#477fc4" /></g>
    <path d="M17 27L26 9" stroke="#d7893c" strokeWidth="3" /><path d="M24 9l1-6 6-3v7l-4 4z" fill="#b69764" />
  </svg>
);
const Adobe = () => (
  <svg width="28" height="27" viewBox="0 0 28 27"><defs><linearGradient id="ad" x1="0" y1="0" x2="1" y2="1"><stop stopColor="#f31c17" /><stop offset="1" stopColor="#750303" /></linearGradient></defs><rect width="28" height="27" fill="url(#ad)" /><path d="M13 5q3-1 2 4c-1 5-5 12-8 13-3 0-1-3 4-5s11-2 13 0-3 3-7-2S12 7 13 5z" fill="none" stroke="#fff" strokeWidth="1.400" /></svg>
);
const Dolphin = () => (
  <svg width="28" height="32" viewBox="0 0 28 32"><path d="M1 3q6-2 12-1 3-2 7-1l-1 3q6 4 7 9l1 7-4-3q-2 8-10 10-1 3-5 4l-6 0 2-4-2-8q6 0 7 4 5-2 5-7l-4 2q0-4 3-7-1-4-5-5Q4 6 1 3z" fill="#8483cd" stroke="#5756a0" strokeWidth=".8" /><path d="M6 3q9 0 14 5 3 5 1 10" stroke="#b7b6ed" strokeWidth="2" fill="none" /></svg>
);
const Powerpoint = () => (
  <svg width="31" height="31" viewBox="0 0 31 31"><path d="M7 1h22v28H1V7q1-6 6-6z" fill="#fbe8df" stroke="#cb4c1c" strokeWidth="2" /><path d="M7.500 22V6.500H12q5 0 5 4.500t-5 4.500H8" fill="none" stroke="#d5521f" strokeWidth="4" /><path d="M14 18l15-5v14l-13 2z" fill="#fff6ef" stroke="#d66737" strokeWidth=".7" /><ellipse cx="22" cy="19" rx="4.500" ry="3" fill="#e26632" /><path d="M17 26l9-2" stroke="#df8053" strokeWidth="2" /></svg>
);
const Photo = () => (
  <svg width="32" height="26" viewBox="0 0 32 26"><rect x="2.500" y="2.500" width="27" height="21" fill="#6cb3e3" stroke="#e7f4fb" /><path d="M4 9q6-4 11-2t13-2v6H4z" fill="#d7eefb" /><path d="M3 12l8 0 8 3 10 1v2H3z" fill="#3a6d54" /><path d="M3 17h26v6H3z" fill="#7fc0d2" /><path d="M1.500 7V1.500H7M25 1.500h5.500V7M1.500 19v5.500H7M25 24.500h5.500V19" stroke="#2978af" strokeWidth="2.600" fill="none" /></svg>
);

const TASKS = [
  { i: <ChromeLogo />, w: 'w-[54px]', tail: 1, gap: 'ml-0', on: true },
  { i: <Explorer />, w: 'w-[52px]', tail: 2, gap: 'ml-[3px]' },
  { i: <Firefox />, w: 'w-[60px]', gap: 'ml-[2px]' },
  { i: <Paint />, w: 'w-[51px]', gap: 'ml-[13px]', plain: true },
  { i: <Xampp size={33} fill="#f1741d" edge="#c25c14" />, w: 'w-[60px]', gap: 'ml-0' },
  { i: <Adobe />, w: 'w-[55px]', tail: 1, gap: 'ml-[2px]' },
  { i: <Dolphin />, w: 'w-[60px]', gap: 'ml-[2px]' },
  { i: <Powerpoint />, w: 'w-[60px]', gap: 'ml-[2px]' },
  { i: <Photo />, w: 'w-[55px]', tail: 1, gap: 'ml-[2px]' },
];
const Frame = ({ on, className = '', children }) => (
  <div className={`box-border flex h-10 items-center justify-center border shadow-[inset_0_0_0_1px_rgba(207,229,217,.75)] ${on ? 'border-white bg-[#bed2c8]/85' : 'border-[#5c8371] bg-[#a0baad]/80'} ${className}`}>{children}</div>
);

function Taskbar() {
  return (
    <div className="absolute bottom-0 left-0 z-30 h-10 w-full border-t border-[#668f7b] bg-gradient-to-b from-[#8aae9c] to-[#7fa28f]">
      <div className="absolute left-0 top-0 h-full w-4 bg-gradient-to-r from-[#2f8f60] to-[#559c78]" />
      <div className="absolute left-[38px] top-[8px]"><svg width="14" height="16" viewBox="0 0 14 16" fill="#278889"><path d="M1 1h4v4H1zM6 1h4v4H6zM1 6h4v4H1zM6 6h4v4H6zM0 11h14v4H0z" /></svg></div>
      <div className="relative flex h-full items-start">
        <svg className="ml-3 mt-[6px]" width="28" height="26" viewBox="0 0 28 26" fill="#fff"><path d="M0 4l11.500-2v10.300H0zM12.500 1.800L27 0v12.300H12.500zM0 13.300h11.500V24L0 22zM12.500 13.300H27V26l-14.500-2z" /></svg>
        <div className="-mt-px ml-3 flex">
          {TASKS.map((t, i) =>
            t.plain ? (
              <div key={i} className={`flex h-10 items-center border-l border-[#759b87] pl-[3px] ${t.w} ${t.gap}`}>{t.i}</div>
            ) : (
              <div key={i} className={`flex ${t.gap}`}>
                <Frame on={t.on} className={t.w}>{t.i}</Frame>
                {Array.from({ length: t.tail || 0 }, (_, k) => <Frame key={k} on={t.on} className="-ml-px w-[5px]" />)}
              </div>
            )
          )}
        </div>
        <div className="ml-auto flex h-full items-center pr-[13px] pt-px text-white">
          <svg width="9" height="6" viewBox="0 0 9 6"><path d="M.5 5.500L4.500.7l4 4.800z" fill="#f4f4f4" stroke="#587565" /></svg>
          <svg className="ml-[11px]" width="18" height="18" viewBox="0 0 18 18"><path d="M2 1v15" stroke="#fff" strokeWidth="2" /><path d="M3 2q4-1 5 1h6v8H8q-2-2-5-1z" fill="#fff" stroke="#476654" strokeWidth=".8" /><circle cx="12" cy="12" r="4.500" fill="#da3833" stroke="#992823" /><path d="M10 10l4 4m0-4l-4 4" stroke="#fff" strokeWidth="1.500" /></svg>
          <svg className="ml-[6px]" width="17" height="14" viewBox="0 0 17 14" fill="#fff" stroke="#406450" strokeWidth=".6"><path d="M.5 10.500h2.800V13H.5zM3.700 9h2.800v4H3.700zM6.900 7h2.800v6H6.900zM10.100 4.500h2.800V13h-2.800zM13.300 1.500h2.800V13h-2.800z" /></svg>
          <svg className="ml-[7px]" width="17" height="16" viewBox="0 0 17 16"><path d="M1 5.500h3L8 1v14l-4-4.500H1z" fill="#fff" stroke="#496957" /><path d="M10 5q2 3 0 6M12.500 3q3 5 0 10M15 1.500q3.500 6.500 0 13" stroke="#fff" fill="none" strokeWidth="1.100" /></svg>
          <div className="ml-[12px] flex w-[60px] flex-col items-center text-[12px] leading-4"><Fit w={43}>1:51 PM</Fit><Fit w={59}>10/28/2016</Fit></div>
        </div>
      </div>
      <div className="absolute left-[1252px] top-[2px] flex h-7 w-[78px] items-center justify-center rounded-sm border border-[#719783]"><Fit w={46} className="text-[#3f6b54]/80">Show all</Fit></div>
      <div className="absolute left-[1343px] top-[11px]"><Cross c="#517765" s={10} /></div>
      <div className="absolute left-[90px] top-[12px] opacity-40"><Fit w={33}>nForm</Fit></div>
      <svg className="absolute left-[220px] top-[14px]" width="10" height="7" viewBox="0 0 10 7" fill="none" stroke="#56796a" strokeWidth="1.800"><path d="M1 6l4-4 4 4" /></svg>
    </div>
  );
}

export default function App() {
  return (
    <div className="relative h-[768px] w-[1366px] overflow-hidden bg-[linear-gradient(90deg,#009b50_0,#00a95b_12%,#00a557_30%,#008d49_60%,#00853f_100%)] font-['Open_Sans','Noto_Sans',sans-serif] text-[12px] leading-4">
      <div className="absolute left-0 top-2.5 h-[758px] w-2.5 bg-[linear-gradient(180deg,#009b50_0,#00994e_20%,#00ac59_35%,#00ae5a_80%,#00a050_100%)]" />
      <div className="absolute left-[97px] top-[7px] h-[3px] w-[25px] bg-[#0013cf]" />
      <div className="absolute left-[246px] top-[7px] h-[3px] w-8 bg-white" />
      <div className="absolute left-[270px] top-[8px] h-[2px] w-[6px] bg-[#cc3443]" />
      <div className="absolute left-[321px] top-[7px] h-[3px] w-8 bg-[repeating-linear-gradient(90deg,#160a26_0_4px,#087040_4px_5px,#121056_5px_9px)]" />
      <div className="absolute left-[399px] top-[7px] h-[3px] w-[15px] bg-[#d5d57d] [clip-path:polygon(0_0,55%_0,100%_100%,0_100%)]" />
      <div className="absolute left-[477px] top-[8px] h-[2px] w-[18px] bg-[#dfe5f0]" />
      <div className="absolute left-[549px] top-[7px] h-[3px] w-[17px] bg-[#d5d57d] [clip-path:polygon(0_0,55%_0,100%_100%,0_100%)]" />
      <div className="absolute left-[702px] top-[8px] h-[2px] w-[18px] bg-[#dfe5f0]" />
      <div className="absolute left-[5px] top-[134px] text-white [text-shadow:1px_1px_1px_#000]">c</div>
      <div className="absolute left-[3px] top-[225px] text-white [text-shadow:1px_1px_1px_#000]">m</div>
      <div className="absolute left-[4px] top-[330px] text-white [text-shadow:1px_1px_1px_#000]">0</div>
      <div className="absolute left-[7px] top-[406px] text-white [text-shadow:1px_1px_1px_#000]">F</div>
      <Browser />
      <Taskbar />
    </div>
  );
}
